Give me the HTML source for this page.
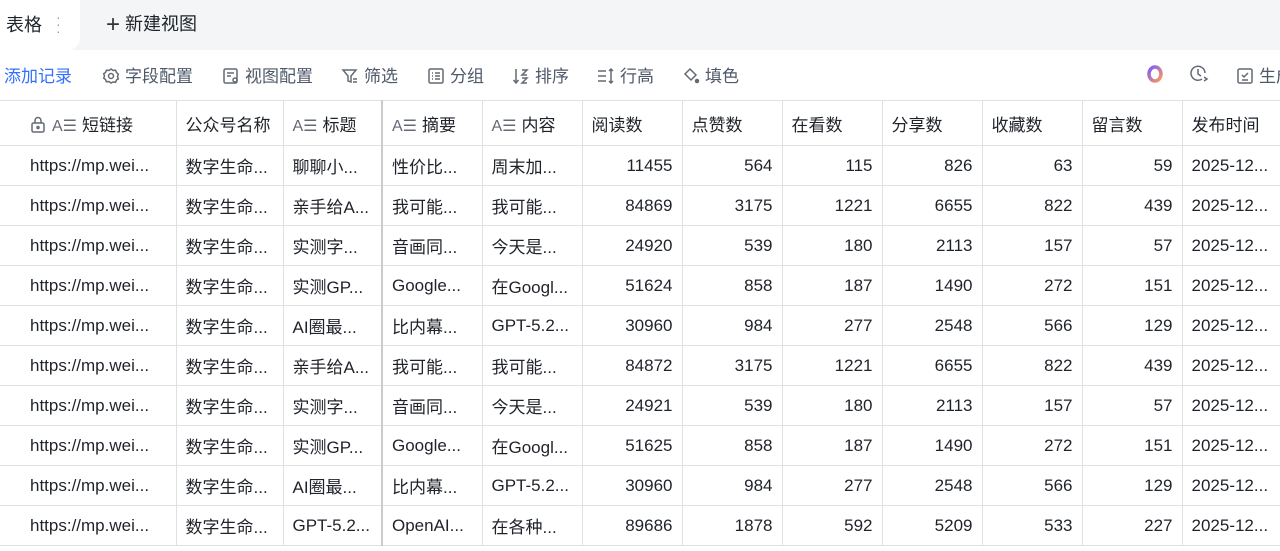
<!DOCTYPE html>
<html><head><meta charset="utf-8"><style>
*{margin:0;padding:0;box-sizing:border-box}
body{width:1280px;height:551px;overflow:hidden;background:#fff;font-family:"Liberation Sans","Noto Sans CJK SC",sans-serif;color:#1f2329;font-size:17px}
.tabs{height:50px;background:#f4f5f7;position:relative}
.tab{position:absolute;left:0;top:0;width:80px;height:50px;background:#fff;border-radius:0 0 12px 0;padding:11px 0 0 6px;font-size:18px}
.tab .d{position:absolute;left:56px;top:14px;color:#999;font-size:14px;line-height:7px}
.new{position:absolute;left:106px;top:10px;font-size:18px}
.tb{height:50px;position:relative;font-size:17px;color:#4e5969}
.tb span{position:absolute;top:12px;white-space:nowrap}
.tb svg{vertical-align:-3px;margin-right:5px}
table{border-collapse:collapse;table-layout:fixed;position:absolute;top:100px;left:0;width:1292px}
td{border:1px solid #dee0e3;height:40px;padding:0 9px;white-space:nowrap;overflow:hidden;font-size:17px;color:#1f2329}
td:first-child{border-left:none;border-right:none;padding:0}
td:nth-child(2){border-left:none}
tr.h td{height:45px;color:#1f2329}
td.n{text-align:right}
.ic{color:#646a73;font-size:16px;margin-right:5px}
.b{border-right:2px solid #c9cbcf}
</style></head><body>
<div class="tabs"><div class="tab">表格<div class="d">·<br>·<br>·</div></div><div class="new"><span style="font-size:24px;color:#333;vertical-align:-2px;font-weight:300">+</span> 新建视图</div></div>
<div class="tb">
<span style="left:4px;color:#3370ff">添加记录</span>
<span style="left:102px"><svg width="18" height="18" viewBox="0 0 18 18" fill="none" stroke="#646a73" stroke-width="1.5"><circle cx="9" cy="9" r="2.5"/><path d="M9 2l2 1.5 2.5-.3 1 2.3 1.8 1.7-.8 2.3.8 2.3-1.8 1.2-1 2.3-2.5-.3L9 16l-2-1.5-2.5.3-1-2.3L1.7 11l.8-2-.8-2.3 1.8-1.2 1-2.3 2.5.3z"/></svg>字段配置</span>
<span style="left:222px"><svg width="18" height="18" viewBox="0 0 18 18" fill="none" stroke="#646a73" stroke-width="1.5"><rect x="2" y="2" width="13" height="14" rx="1.5"/><path d="M5 6h7M5 9h4"/><circle cx="13" cy="13" r="2"/></svg>视图配置</span>
<span style="left:341px"><svg width="18" height="18" viewBox="0 0 18 18" fill="none" stroke="#646a73" stroke-width="1.5"><path d="M2 3h13l-5 6v6l-3-1V9z"/><path d="M12 12h4M12 15h4"/></svg>筛选</span>
<span style="left:427px"><svg width="18" height="18" viewBox="0 0 18 18" fill="none" stroke="#646a73" stroke-width="1.5"><rect x="2" y="2" width="14" height="14" rx="1.5"/><path d="M5 6h1M8 6h5M5 9h1M8 9h5M5 12h1M8 12h5"/></svg>分组</span>
<span style="left:512px"><svg width="18" height="18" viewBox="0 0 18 18" fill="none" stroke="#646a73" stroke-width="1.5"><path d="M4 2v14M1.5 13l2.5 3 2.5-3M10 3h5l-5 5h5M10 11h5l-5 5h5"/></svg>排序</span>
<span style="left:597px"><svg width="18" height="18" viewBox="0 0 18 18" fill="none" stroke="#646a73" stroke-width="1.5"><path d="M1 4h8M1 9h8M1 14h8M14 2v14M12 4l2-2 2 2M12 14l2 2 2-2"/></svg>行高</span>
<span style="left:682px"><svg width="18" height="18" viewBox="0 0 18 18" fill="none" stroke="#646a73" stroke-width="1.5"><path d="M8 2l6 6-5 5-6-6z"/><circle cx="15" cy="14" r="1.5" fill="#646a73"/></svg>填色</span>
<span style="left:1146px;top:15px"><svg width="18" height="18" viewBox="0 0 18 18"><defs><linearGradient id="g" x1="0" y1="0" x2="1" y2="1"><stop offset="0" stop-color="#7a5cff"/><stop offset="1" stop-color="#ff9a5a"/></linearGradient></defs><ellipse cx="9" cy="9" rx="6" ry="7" fill="none" stroke="url(#g)" stroke-width="3.5"/></svg></span>
<span style="left:1190px;top:15px"><svg width="20" height="18" viewBox="0 0 20 18" fill="none" stroke="#646a73" stroke-width="1.5"><path d="M15 8a7 7 0 1 0-3 6"/><path d="M8 4v5l3 2M14 12l3 2-3 2"/></svg></span>
<span style="left:1236px"><svg width="18" height="18" viewBox="0 0 18 18" fill="none" stroke="#646a73" stroke-width="1.5"><rect x="2" y="2" width="14" height="14" rx="1.5"/><path d="M6 8l2 2 4-4M6 13h6"/></svg>生成</span>
</div>
<table>
<colgroup><col style="width:21px"><col style="width:155px"><col style="width:107px"><col style="width:99px"><col style="width:100px"><col style="width:100px"><col style="width:100px"><col style="width:100px"><col style="width:100px"><col style="width:100px"><col style="width:100px"><col style="width:100px"><col style="width:110px"></colgroup>
<tr class="h"><td></td><td style="padding-left:9px"><svg width="16" height="18" viewBox="0 0 16 18" fill="none" stroke="#646a73" stroke-width="1.5" style="vertical-align:-3px;margin-right:6px"><rect x="2" y="7" width="12" height="9" rx="1.5"/><path d="M5 7V4.5a3 3 0 0 1 6 0V7"/><circle cx="8" cy="11.5" r="1"/></svg><span class="ic">A☰</span>短链接</td><td>公众号名称</td><td class="b"><span class="ic">A☰</span>标题</td><td><span class="ic">A☰</span>摘要</td><td><span class="ic">A☰</span>内容</td><td>阅读数</td><td>点赞数</td><td>在看数</td><td>分享数</td><td>收藏数</td><td>留言数</td><td>发布时间</td></tr>
<tr><td></td><td>https://mp.wei...</td><td>数字生命...</td><td class="b">聊聊小...</td><td>性价比...</td><td>周末加...</td><td class="n">11455</td><td class="n">564</td><td class="n">115</td><td class="n">826</td><td class="n">63</td><td class="n">59</td><td>2025-12...</td></tr>
<tr><td></td><td>https://mp.wei...</td><td>数字生命...</td><td class="b">亲手给A...</td><td>我可能...</td><td>我可能...</td><td class="n">84869</td><td class="n">3175</td><td class="n">1221</td><td class="n">6655</td><td class="n">822</td><td class="n">439</td><td>2025-12...</td></tr>
<tr><td></td><td>https://mp.wei...</td><td>数字生命...</td><td class="b">实测字...</td><td>音画同...</td><td>今天是...</td><td class="n">24920</td><td class="n">539</td><td class="n">180</td><td class="n">2113</td><td class="n">157</td><td class="n">57</td><td>2025-12...</td></tr>
<tr><td></td><td>https://mp.wei...</td><td>数字生命...</td><td class="b">实测GP...</td><td>Google...</td><td>在Googl...</td><td class="n">51624</td><td class="n">858</td><td class="n">187</td><td class="n">1490</td><td class="n">272</td><td class="n">151</td><td>2025-12...</td></tr>
<tr><td></td><td>https://mp.wei...</td><td>数字生命...</td><td class="b">AI圈最...</td><td>比内幕...</td><td>GPT-5.2...</td><td class="n">30960</td><td class="n">984</td><td class="n">277</td><td class="n">2548</td><td class="n">566</td><td class="n">129</td><td>2025-12...</td></tr>
<tr><td></td><td>https://mp.wei...</td><td>数字生命...</td><td class="b">亲手给A...</td><td>我可能...</td><td>我可能...</td><td class="n">84872</td><td class="n">3175</td><td class="n">1221</td><td class="n">6655</td><td class="n">822</td><td class="n">439</td><td>2025-12...</td></tr>
<tr><td></td><td>https://mp.wei...</td><td>数字生命...</td><td class="b">实测字...</td><td>音画同...</td><td>今天是...</td><td class="n">24921</td><td class="n">539</td><td class="n">180</td><td class="n">2113</td><td class="n">157</td><td class="n">57</td><td>2025-12...</td></tr>
<tr><td></td><td>https://mp.wei...</td><td>数字生命...</td><td class="b">实测GP...</td><td>Google...</td><td>在Googl...</td><td class="n">51625</td><td class="n">858</td><td class="n">187</td><td class="n">1490</td><td class="n">272</td><td class="n">151</td><td>2025-12...</td></tr>
<tr><td></td><td>https://mp.wei...</td><td>数字生命...</td><td class="b">AI圈最...</td><td>比内幕...</td><td>GPT-5.2...</td><td class="n">30960</td><td class="n">984</td><td class="n">277</td><td class="n">2548</td><td class="n">566</td><td class="n">129</td><td>2025-12...</td></tr>
<tr><td></td><td>https://mp.wei...</td><td>数字生命...</td><td class="b">GPT-5.2...</td><td>OpenAI...</td><td>在各种...</td><td class="n">89686</td><td class="n">1878</td><td class="n">592</td><td class="n">5209</td><td class="n">533</td><td class="n">227</td><td>2025-12...</td></tr>
</table>
</body></html>
